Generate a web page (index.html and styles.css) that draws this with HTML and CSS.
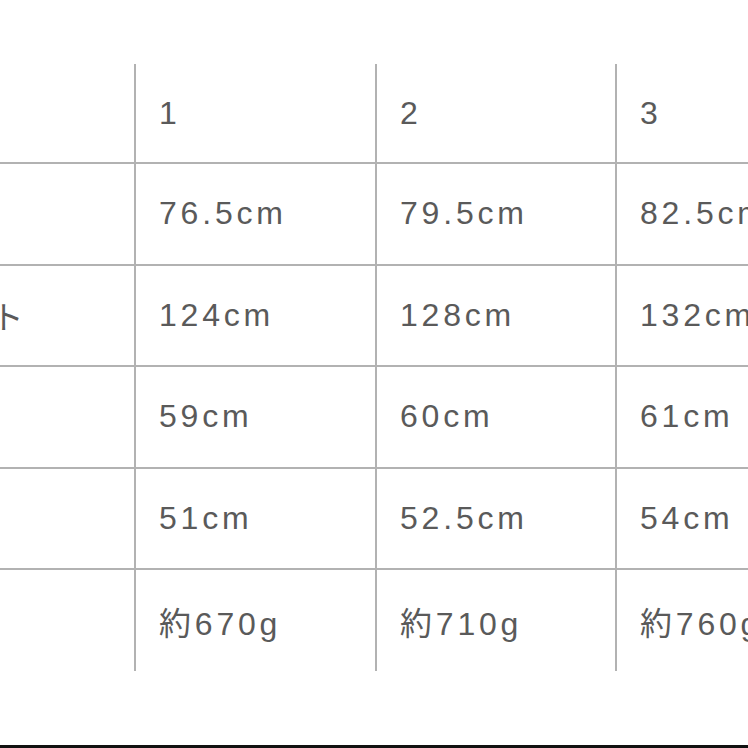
FILE: index.html
```html
<!DOCTYPE html>
<html lang="ja">
<head>
<meta charset="utf-8">
<title>サイズ表</title>
<link rel="stylesheet" href="styles.css">
</head>
<body>
<div class="page">
  <div class="size-table">
    <div class="cell label"></div>
    <div class="cell">1</div>
    <div class="cell">2</div>
    <div class="cell">3</div>

    <div class="cell label">着丈</div>
    <div class="cell">76.5cm</div>
    <div class="cell">79.5cm</div>
    <div class="cell">82.5cm</div>

    <div class="cell label">バスト</div>
    <div class="cell">124cm</div>
    <div class="cell">128cm</div>
    <div class="cell">132cm</div>

    <div class="cell label">袖丈</div>
    <div class="cell">59cm</div>
    <div class="cell">60cm</div>
    <div class="cell">61cm</div>

    <div class="cell label">肩幅</div>
    <div class="cell">51cm</div>
    <div class="cell">52.5cm</div>
    <div class="cell">54cm</div>

    <div class="cell label">重量</div>
    <div class="cell">約670g</div>
    <div class="cell">約710g</div>
    <div class="cell">約760g</div>
  </div>
  <div class="spacer"></div>
  <div class="bottom-bar"></div>
</div>
</body>
</html>
```

FILE: styles.css
```css
html, body {
  margin: 0;
  padding: 0;
  background: #ffffff;
}

body {
  width: 748px;
  height: 748px;
  overflow: hidden;
  font-family: "Liberation Sans", "Noto Sans CJK JP", sans-serif;
}

.page {
  height: 748px;
  display: flex;
  flex-direction: column;
  padding-top: 64px;
  box-sizing: border-box;
}

.size-table {
  display: grid;
  width: max-content;
  margin-left: -105px;
  grid-template-columns: 239px 239px 238px 239px;
  grid-template-rows: 98px 99.5px 99.5px 99.5px 99.5px 101px;
  gap: 2px;
  background: #b2b2b2;
}

.cell {
  background: #ffffff;
  display: flex;
  align-items: center;
  padding-left: 23px;
  font-size: 32px;
  letter-spacing: 3.8px;
  color: #5a5a5a;
  white-space: nowrap;
  overflow: hidden;
}

.label {
  padding-left: 25px;
}

.spacer {
  flex: 1;
}

.bottom-bar {
  height: 3px;
  background: #111111;
}
```
